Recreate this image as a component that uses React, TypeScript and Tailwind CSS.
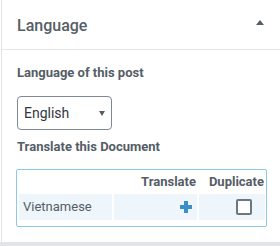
export default function App() {
  return (
    <div className="w-[280px] h-[246px] bg-white flex flex-col overflow-hidden font-['Roboto',sans-serif]">
      <div className="ml-px border-l border-[#e2e4e7] flex-1 flex flex-col">
        {/* panel header */}
        <div className="h-[50px] shrink-0 border-b border-[#e2e4e7] flex items-center justify-between pl-[15px] pr-[16px]">
          <h2 className="text-[16px] font-medium text-[#555d66] leading-5 mt-[3px]">Language</h2>
          <svg width="8" height="5" viewBox="0 0 8 5" className="-mt-[5px]">
            <path d="M0 5 L4 0 L8 5 Z" fill="#555d66" />
          </svg>
        </div>

        {/* panel body */}
        <div className="pl-[15px] pt-[13px]">
          <p className="text-[13px] font-bold text-[#555d66] leading-5">Language of this post</p>
          <div className="mt-[13px] w-[95px] h-[34px] border border-[#7e8993] rounded-[4px] flex items-center justify-between pl-[6px] pr-[6px]">
            <span className="text-[14px] text-[#32373c]">English</span>
            <svg width="6" height="5" viewBox="0 0 6 5">
              <path d="M0 0 L6 0 L3 5 Z" fill="#555d66" />
            </svg>
          </div>
          <p className="mt-[7px] text-[13px] font-bold text-[#555d66] leading-5">Translate this Document</p>

          <div className="mt-[12px] -ml-px w-[251px] border border-[#8cc8ea] rounded-[2px] pl-[2px] pr-[1px] pt-[2px] pb-[6px] grid grid-cols-[93px_83px_66px] gap-[2px]">
            <div className="h-[20px]" />
            <div className="h-[20px] text-right pr-[1px] text-[13px] font-bold text-[#555d66] leading-5">Translate</div>
            <div className="h-[20px] text-right pr-[1px] text-[13px] font-bold text-[#555d66] leading-5">Duplicate</div>

            <div className="h-[26px] bg-[#eef5fb] flex items-center pl-[4px] text-[13px] text-[#555d66]">Vietnamese</div>
            <div className="h-[26px] bg-[#eef5fb] flex items-center justify-end pr-[5px]">
              <svg width="12" height="12" viewBox="0 0 12 12">
                <path d="M4 0 H8 V4 H12 V8 H8 V12 H4 V8 H0 V4 H4 Z" fill="#3a8fc8" />
              </svg>
            </div>
            <div className="h-[26px] bg-[#eef5fb] flex items-center justify-end pr-[13px]">
              <span className="w-[16px] h-[16px] border-2 border-[#6c7781] rounded-[2px] bg-white" />
            </div>
          </div>
        </div>
      </div>
      <div className="h-[4px] shrink-0 bg-[#e2e4e7]" />
    </div>
  );
}
